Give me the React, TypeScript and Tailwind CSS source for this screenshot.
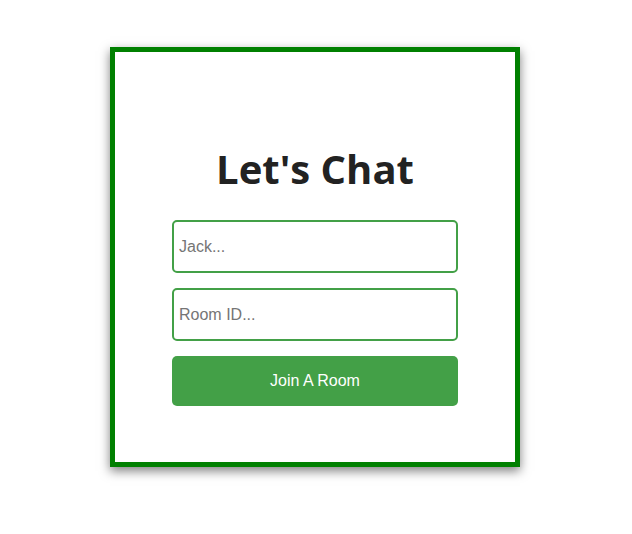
export default function App() {
  return (
    <div className="w-full h-[534px] bg-white flex justify-center pt-[47px] pr-[2px]">
      <div className="w-[410px] h-[420px] border-[5px] border-[#008000] bg-white shadow-[0_4px_10px_rgba(0,0,0,0.5)] flex flex-col items-center">
        <h1 className="mt-[90px] text-[40px] leading-[54px] font-bold text-[#222] font-['Open_Sans',sans-serif]">
          Let's Chat
        </h1>
        <div className="mt-[24px] w-[286px] flex flex-col gap-[15px] font-['Liberation_Sans',Arial,sans-serif]">
          <input
            type="text"
            placeholder="Jack..."
            className="h-[53px] w-full border-2 border-[#43a047] rounded-[5px] px-[5px] text-base text-[#222] placeholder:text-[#757575] outline-none"
          />
          <input
            type="text"
            placeholder="Room ID..."
            className="h-[53px] w-full border-2 border-[#43a047] rounded-[5px] px-[5px] text-base text-[#222] placeholder:text-[#757575] outline-none"
          />
          <button className="h-[50px] w-full bg-[#43a047] rounded-[5px] text-white text-base">
            Join A Room
          </button>
        </div>
      </div>
    </div>
  );
}
